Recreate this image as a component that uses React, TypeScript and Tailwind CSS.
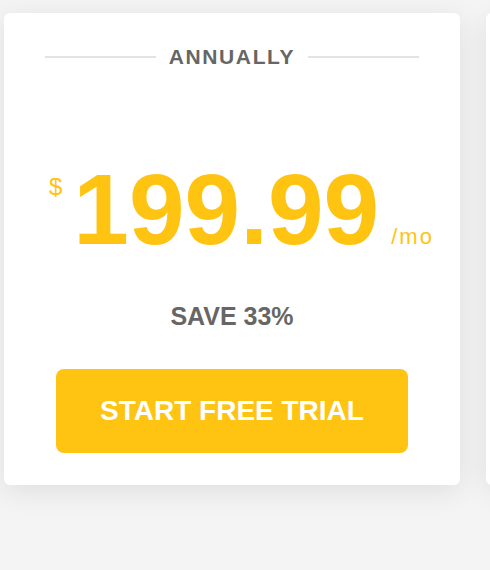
export default function App() {
  return (
    <div
      className="h-[570px] w-[490px] overflow-hidden bg-[#f4f4f4]"
      style={{ fontFamily: '"Liberation Sans", Arial, sans-serif' }}
    >
      <div className="flex gap-[26px] pl-[4px] pt-[13px]">
        <div className="w-[456px] shrink-0 rounded-[6px] bg-white px-[41px] pb-[32px] pt-[33px] shadow-[0_6px_28px_rgba(0,0,0,0.09)]">
          <div className="flex items-center">
            <div className="h-[2px] flex-1 bg-[#e3e3e3]" />
            <span className="mx-[13px] text-[21px] font-bold leading-none tracking-[1.6px] text-[#666]">
              ANNUALLY
            </span>
            <div className="h-[2px] flex-1 bg-[#e3e3e3]" />
          </div>

          <div className="mt-[92px] flex items-baseline pl-[4px] text-[#ffc312]">
            <span className="mr-[11px] mt-[16px] self-start text-[24px] leading-none">$</span>
            <span className="text-[100px] font-bold leading-none">199.99</span>
            <span className="ml-[12px] text-[22px] leading-none tracking-[2px]">/mo</span>
          </div>

          <div className="mt-[45px] text-center text-[25px] font-bold leading-none text-[#666]">
            SAVE 33%
          </div>

          <button className="mx-auto mt-[40px] flex h-[84px] w-[352px] items-center justify-center rounded-[8px] bg-[#ffc312] text-[28px] font-bold leading-none text-white">
            START FREE TRIAL
          </button>
        </div>

        <div className="h-[472px] w-[456px] shrink-0 rounded-[6px] bg-white shadow-[0_6px_28px_rgba(0,0,0,0.09)]" />
      </div>
    </div>
  );
}
